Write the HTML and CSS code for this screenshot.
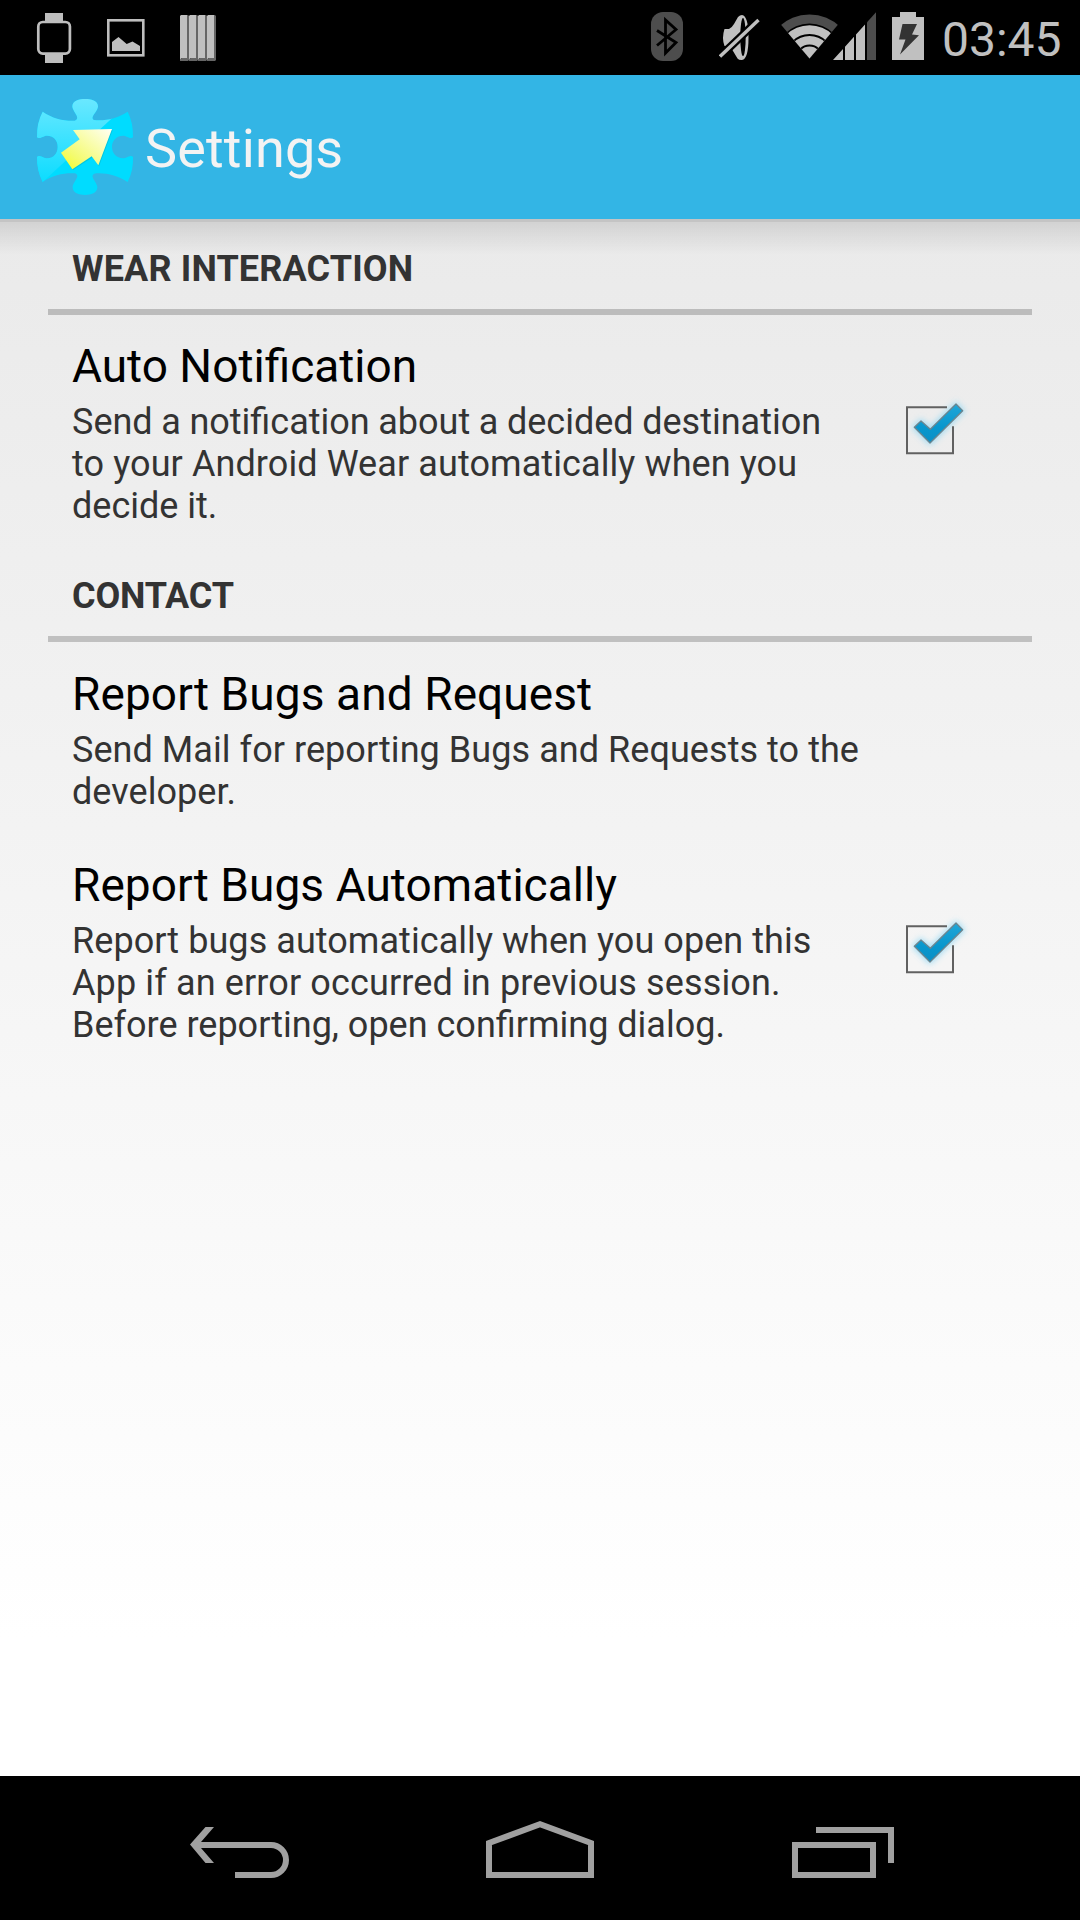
FILE: index.html
```html
<!DOCTYPE html>
<html lang="en">
<head>
<meta charset="utf-8">
<title>Settings</title>
<link rel="stylesheet" href="styles.css">
</head>
<body>
<div class="screen">
  <div class="status-bar">
    <div class="status-notifications">
      <svg class="icon-watch" width="36" height="52" viewBox="36 12 36 52"><path fill="#bebebe" d="M45 13h18v9H45zM45 54h18v9H45z"/><rect x="38.3" y="22" width="31.6" height="31.6" rx="4.5" fill="#000" stroke="#bebebe" stroke-width="2.7"/></svg>
      <svg class="icon-picture" width="38" height="38" viewBox="107 19 38 38"><rect x="108.3" y="20.3" width="35" height="35" fill="none" stroke="#bebebe" stroke-width="2.6"/><path fill="#bebebe" d="M112 42l6.500-5 8.200 7 5.800-2.500 7.500 4.500v5h-28z"/></svg>
      <svg class="icon-stripes" width="36" height="46" viewBox="180 15 36 46"><g id="stripe"><path fill="#666" d="M182 15h6l1 1v44l-1 1h-8v-2l2-1z"/><path fill="#c0c0c0" d="M180 16l1-1h6v43h-5.500l-1.500 1.500z"/></g><use href="#stripe" x="9"/><use href="#stripe" x="18"/><use href="#stripe" x="27"/></svg>
    </div>
    <div class="status-system">
      <svg class="icon-bluetooth" width="32" height="49" viewBox="651 12 32 49"><rect x="651" y="12" width="32" height="49" rx="12" fill="#4d4d4d"/><path d="M657 30.500l19 12-10.500 10.500V20L676 29.500 657 45.500" fill="none" stroke="#000" stroke-width="2.800"/></svg>
      <svg class="icon-muted" width="41" height="46" viewBox="719 15 41 46"><path fill="#c0c0c0" d="M724.500 29h4.500q3-1.500 5-5l4-7q2-2 4-2 6.500 1 6.500 22.500T742 60q-3 .2-4.500-1.500L730 46h-5.500q-3-8 0-17z"/><ellipse cx="743" cy="37" rx="2.700" ry="19" fill="#000"/><path d="M718 58.500l42.500-40.500" stroke="#000" stroke-width="8"/><path d="M720 56.500l38.500-36.500" stroke="#c0c0c0" stroke-width="3.400"/></svg>
      <svg class="icon-wifi" width="60" height="45" viewBox="780 14 60 45"><clipPath id="fan"><path d="M809.500 58.500L771.700 13.500h75.600z"/></clipPath><g clip-path="url(#fan)"><circle cx="809.500" cy="58.500" r="44" fill="#4d4d4d"/><circle cx="809.500" cy="58.500" r="35" fill="#000"/><circle cx="809.500" cy="58.500" r="33.200" fill="#c0c0c0"/><g fill="none" stroke="#000" stroke-width="2"><circle cx="809.500" cy="58.500" r="23.500"/><circle cx="809.500" cy="58.500" r="12.900"/></g></g></svg>
      <svg class="icon-signal" width="43" height="48" viewBox="833 12 43 48"><path fill="#c0c0c0" d="M833 60l10-11v11zM845 60V46.700l9-10V60zM856 60V34.500l9-10V60z"/><path fill="#4d4d4d" d="M867 60V22.300l9-10V60z"/></svg>
      <svg class="icon-battery" width="32" height="48" viewBox="892 12 32 48"><path fill="#c0c0c0" d="M892 17h8v-5h16v5h8v43h-32z"/><path fill="#333" d="M902.500 24h14.500l-5 10.500 7 .700L900 54.500l5.500-15h-6.500z"/></svg>
      <span class="clock">03:45</span>
    </div>
  </div>

  <header class="action-bar">
    <svg class="app-logo" width="98" height="98" viewBox="48 54 294 294">
      <defs>
        <linearGradient id="gloss" x1="0" y1="0" x2="0" y2="1"><stop offset="0" stop-color="#6be8ff"/><stop offset="1" stop-color="#0cdcff"/></linearGradient>
        <linearGradient id="arrow" x1="0" y1="1" x2="1" y2="0"><stop offset="0" stop-color="#f6ff20"/><stop offset=".3" stop-color="#f4fb70"/><stop offset="1" stop-color="#fffff4"/></linearGradient>
        <clipPath id="piece"><path d="M68 95C98 116 135 124 165 122C184 114 157 95 157 79C157 62 178 57 195 57C213 57 234 62 234 79C234 95 208 112 222 120C255 124 292 115 323 95Q340 128 339 172C334 178 323 171 315 168C293 165 276 180 276 201C276 222 293 238 315 234C323 231 334 224 339 231Q341 270 323 306C292 286 255 277 222 281C208 290 232 306 232 322C232 339 213 345 195 345C177 345 158 339 158 322C158 306 184 288 165 280C135 278 98 284 68 306Q50 270 51 231C56 224 67 231 75 234C97 238 113 223 113 201C113 179 97 165 75 168C67 171 56 178 51 172Q50 128 68 95Z"/></clipPath>
      </defs>
      <g clip-path="url(#piece)"><path fill="#00dcff" d="M48 54h294v294H48z"/><path fill="url(#gloss)" d="M48 54h294L68 306H48z"/></g>
      <path fill="#00aebc" opacity=".45" d="M162 153l116-3-41 109-19-27-59 38-33-49 56-42z"/>
      <path fill="url(#arrow)" d="M159 150l117-3-41 109-20-27-58 39-34-50 56-40z"/>
    </svg>
    <h1 class="title">Settings</h1>
  </header>

  <main class="content">
    <h2 class="category category-wear">WEAR INTERACTION</h2>
    <section class="preference">
      <div class="preference-text">
        <h3 class="name">Auto Notification</h3>
        <p class="summary"><span class="close-words">Send a notification about a decided destination</span><br><span class="open-2">to your Android Wear automatically when you</span><br>decide it.</p>
      </div>
      <svg class="checkbox" width="80" height="70" viewBox="48 38 240 210">
        <defs><filter id="glow" x="-30%" y="-30%" width="160%" height="160%"><feGaussianBlur stdDeviation="10"/></filter>
        <linearGradient id="tick" x1="0" y1="0" x2="0" y2="1"><stop offset="0" stop-color="#20a6d8"/><stop offset=".6" stop-color="#0897cd"/><stop offset="1" stop-color="#0b8fc5"/></linearGradient></defs>
        <path d="M103 141L123 122 151 147 228 71 248 91 150 188Z" fill="#75cdf0" stroke="#8ed8f5" stroke-width="12" opacity=".75" filter="url(#glow)"/>
        <path d="M201 81H81v138h138v-81" fill="none" stroke="#616161" stroke-width="6"/>
        <path d="M103 141L123 122 151 147 228 71 248 91 150 188Z" fill="url(#tick)" stroke="#6b858f" stroke-width="4" stroke-linejoin="round"/>
      </svg>
    </section>

    <h2 class="category category-contact">CONTACT</h2>
    <section class="preference preference-plain">
      <div class="preference-text">
        <h3 class="name open-2">Report Bugs and Request</h3>
        <p class="summary open-1">Send Mail for reporting Bugs and Requests to the<br>developer.</p>
      </div>
    </section>
    <section class="preference">
      <div class="preference-text">
        <h3 class="name open-1">Report Bugs Automatically</h3>
        <p class="summary"><span class="open-1">Report bugs automatically when you open this</span><br><span class="open-3">App if an error occurred in previous session.</span><br>Before reporting, open confirming dialog.</p>
      </div>
      <svg class="checkbox" width="80" height="70" viewBox="48 38 240 210">
        <path d="M103 141L123 122 151 147 228 71 248 91 150 188Z" fill="#75cdf0" stroke="#8ed8f5" stroke-width="12" opacity=".75" filter="url(#glow)"/>
        <path d="M201 81H81v138h138v-81" fill="none" stroke="#616161" stroke-width="6"/>
        <path d="M103 141L123 122 151 147 228 71 248 91 150 188Z" fill="url(#tick)" stroke="#6b858f" stroke-width="4" stroke-linejoin="round"/>
      </svg>
    </section>
  </main>

  <nav class="nav-bar">
    <svg width="300" height="144" viewBox="90 1776 300 144"><path fill="#a0a0a0" d="M190 1844.500l15.500-17.500h8.500l-13 15h70a18 18 0 0 1 0 36h-36v-6h36a12 12 0 0 0 0-24h-70l13 15h-8.500z"/></svg>
    <svg width="300" height="144" viewBox="390 1776 300 144"><path d="M489 1843l51-18.800 51 18.800v32H489z" fill="none" stroke="#a0a0a0" stroke-width="6"/></svg>
    <svg width="300" height="144" viewBox="690 1776 300 144"><path d="M795 1845h78v30h-78zM816 1830h75v33" fill="none" stroke="#a0a0a0" stroke-width="6"/></svg>
  </nav>
</div>
</body>
</html>
```
FILE: styles.css
```css
* { box-sizing: border-box; }
body { margin: 0; background: #000; font-family: Roboto, sans-serif; }
h1, h2, h3, p { margin: 0; font-weight: 400; }
svg { display: block; flex: none; }

.screen {
  display: flex;
  flex-direction: column;
  width: 1080px;
  height: 1920px;
  overflow: hidden;
}

.status-bar {
  display: flex;
  justify-content: space-between;
  height: 75px;
  flex: none;
  background: #000;
}
.status-notifications, .status-system { display: flex; align-items: flex-start; }
.status-notifications { padding-left: 36px; }
.icon-watch { margin-top: 12px; }
.icon-picture { margin: 19px 0 0 35px; }
.icon-stripes { margin: 15px 0 0 35px; }
.icon-bluetooth { margin-top: 12px; }
.icon-muted { margin: 15px 0 0 36px; }
.icon-wifi { margin: 14px 0 0 20px; }
.icon-signal { margin: 12px 0 0 -7px; }
.icon-battery { margin: 12px 0 0 16px; }
.clock {
  width: 138px;
  margin: 12px 0 0 18px;
  font-size: 48px;
  line-height: 56px;
  color: #c0c0c0;
  white-space: nowrap;
}

.action-bar {
  display: flex;
  align-items: center;
  flex: none;
  height: 144px;
  padding-left: 36px;
  background: #33b5e5;
}
.title {
  margin-left: 11px;
  padding-top: 4px;
  font-size: 54px;
  line-height: 64px;
  letter-spacing: .15px;
  color: #f3f3f3;
}

.content {
  flex: 1;
  padding: 3px 48px 0;
  background:
    linear-gradient(#c4c4c4, #c4c4c4) 0 0 / 100% 3px no-repeat,
    linear-gradient(rgba(0, 0, 0, .1), rgba(0, 0, 0, .055) 45%, transparent) 0 3px / 100% 33px no-repeat,
    linear-gradient(#eaeaea, #fff 1420px);
}
.category {
  height: 93px;
  padding: 26px 24px 0;
  border-bottom: 6px solid rgba(0, 0, 0, .2);
  font-size: 36px;
  font-weight: 700;
  line-height: 42px;
  color: #333;
}
.category-wear { letter-spacing: .15px; }
.category-contact { letter-spacing: -.15px; }
.preference {
  display: flex;
  align-items: center;
  justify-content: space-between;
  padding: 22px 56px 22px 24px;
}
.preference-plain { padding-top: 23px; padding-bottom: 21px; }
.preference-text { display: grid; gap: 6px; white-space: nowrap; }
.name { font-size: 46px; line-height: 58px; color: #000; }
.summary { font-size: 36px; line-height: 42px; color: #333; }
.checkbox { margin-bottom: 8px; }

/* Per-line tracking */
.close-words { word-spacing: -.35px; }
.open-1 { letter-spacing: .055px; }
.open-2 { letter-spacing: .09px; }
.open-3 { letter-spacing: .13px; }

.nav-bar {
  display: flex;
  justify-content: center;
  flex: none;
  height: 144px;
  background: #000;
}
```
